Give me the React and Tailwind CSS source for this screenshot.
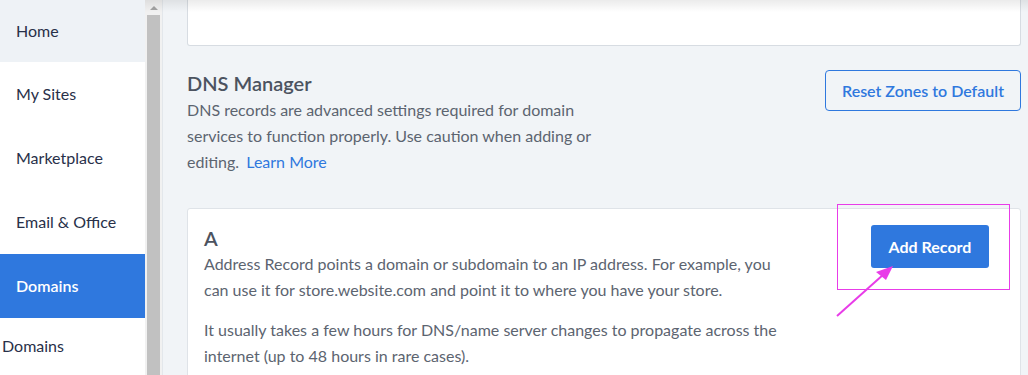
import { useState } from "react";

const navItems = ["Home", "My Sites", "Marketplace", "Email & Office", "Domains"];

const Sidebar = ({ active }) => {
    return (
        <aside className="w-[145px] shrink-0 bg-white flex flex-col">
            {navItems.map((item, i) => (
                <div
                    key={item}
                    className={
                        (i === 0 ? "h-[62px] bg-[#eef2f6] " : "h-[64px] ") +
                        (item === active ? "bg-[#2f78de] text-white font-semibold " : "text-[#283049] ") +
                        "flex items-center pl-4 text-[16px]"
                    }
                >
                    {item}
                </div>
            ))}
            {/* sub menu */}
            <div className="h-[56px] flex items-center pl-[2px] text-[16px] text-[#283049]">Domains</div>
        </aside>
    );
};

const ScrollTrack = () => (
    <div className="w-[17px] shrink-0 bg-[#f1f1f1] flex flex-col items-center">
        <div className="h-[15px] flex items-center justify-center">
            <div className="w-0 h-0 border-l-[4px] border-r-[4px] border-b-[4px] border-l-transparent border-r-transparent border-b-[#a3a3a3]" />
        </div>
        <div className="w-[13px] flex-1 bg-[#c1c1c1]" />
    </div>
);

export default function App() {
    const [records] = useState([
        {
            type: "A",
            text: "Address Record points a domain or subdomain to an IP address. For example, you can use it for store.website.com and point it to where you have your store.",
        },
    ]);

    return (
        <div className="relative flex h-[375px] w-[1028px] overflow-hidden bg-[#f1f4f7] font-['Lato',sans-serif]">
            <Sidebar active="Domains" />
            <ScrollTrack />

            <main className="flex-1 pl-6 pr-[7px] border-l border-[#e3e7eb]">
                {/* card above, scrolled out */}
                <div className="h-[46px] bg-white border border-t-0 border-[#d7dce2] rounded-b-[3px]" />

                <div className="mt-[24px] flex justify-between items-start">
                    <div>
                        <h2 className="text-[20px] leading-[27px] font-semibold text-[#4c5360]">DNS Manager</h2>
                        <p className="w-[420px] text-[16px] leading-[26px] text-[#5c6470]">
                            DNS records are advanced settings required for domain services to function properly. Use caution when adding or editing.{" "}
                            <span className="ml-[3px] text-[#2f78de]">Learn More</span>
                        </p>
                    </div>
                    <button className="h-[41px] w-[196px] border border-[#2f78de] rounded-[4px] text-[#2f78de] text-[16px] font-semibold">
                        Reset Zones to Default
                    </button>
                </div>

                {records.map(r => (
                    <section key={r.type} className="mt-[33px] bg-white border border-[#dfe3e8] rounded-[3px] pl-[16px] pr-[31px] pt-[16px] pb-6 flex justify-between items-start">
                        <div className="w-[586px]">
                            <h3 className="text-[20px] leading-[26px] font-semibold text-[#4c5360]">{r.type}</h3>
                            <p className="text-[16px] leading-[26px] text-[#5c6470]">{r.text}</p>
                            <p className="mt-[14px] text-[16px] leading-[26px] text-[#5c6470]">
                                It usually takes a few hours for DNS/name server changes to propagate across the internet (up to 48 hours in rare cases).
                            </p>
                        </div>
                        <button className="h-[43px] w-[118px] bg-[#2f78de] rounded-[3px] text-white text-[16px] font-bold">
                            Add Record
                        </button>
                    </section>
                ))}
            </main>

            {/* top shadow of the scrolled area */}
            <div className="absolute left-[145px] right-0 top-0 h-[12px] bg-gradient-to-b from-[#00000014] to-transparent pointer-events-none" />

            {/* annotation overlay */}
            <svg className="absolute left-0 top-0 pointer-events-none" width="1028" height="375">
                <rect x="837.5" y="204.5" width="172" height="85" fill="none" stroke="#e83ce8" strokeWidth="1" />
                <line x1="837" y1="316" x2="884" y2="274" stroke="#e83ce8" strokeWidth="2" />
                <polygon points="893,266 876,272 886,280" fill="#e83ce8" />
            </svg>
        </div>
    );
}
